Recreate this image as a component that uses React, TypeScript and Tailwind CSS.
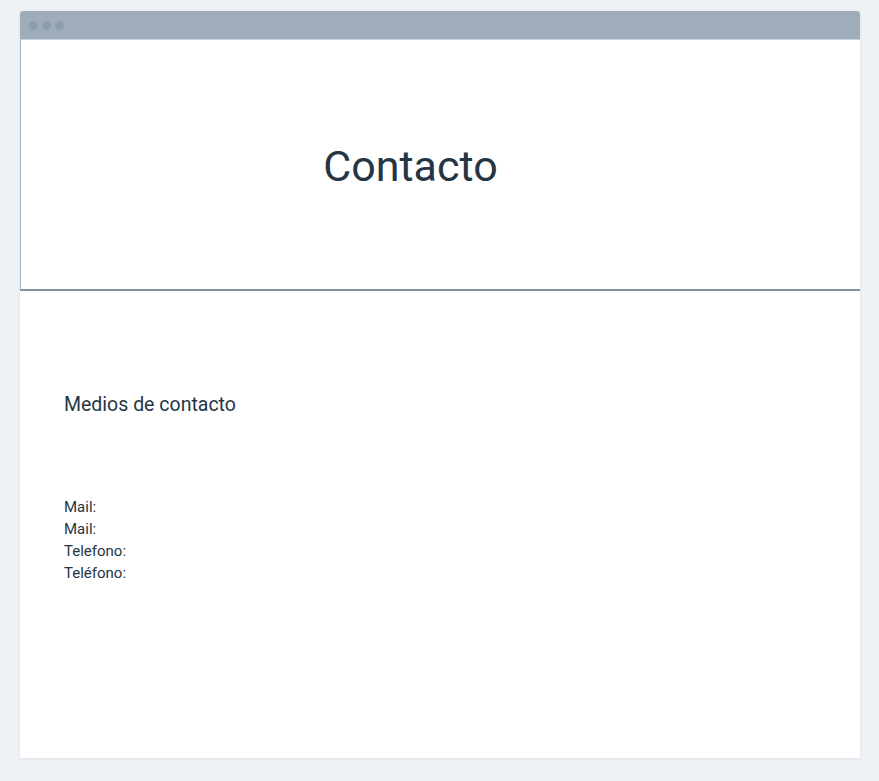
export default function App() {
  return (
    <div className="min-h-[781px] w-full bg-[#eef2f6] pt-[11px] pl-[20px] pr-[19px]" style={{ fontFamily: '"Roboto", "Liberation Sans", sans-serif' }}>
      <div className="w-[840px] bg-white shadow-[0_1px_3px_rgba(0,0,0,0.08)]">
        <div className="h-[29px] rounded-t-[3px] bg-[#9eadb9] flex items-center gap-[4px] pl-[9px] border-b border-[#c5d0d8]">
          <span className="w-[9px] h-[9px] rounded-full bg-[#8e9dab]" />
          <span className="w-[9px] h-[9px] rounded-full bg-[#8e9dab]" />
          <span className="w-[9px] h-[9px] rounded-full bg-[#8e9dab]" />
        </div>
        <div className="h-[251px] border-l border-[#aab6c1] border-b-2 border-b-[#8192a1] flex items-center justify-center pr-[60px] pt-[4px]">
          <h1 className="text-[43px] leading-none text-[#253544]">Contacto</h1>
        </div>
        <div className="h-[467px] pl-[44px] pt-[102px]">
          <h2 className="text-[19.5px] leading-[24px] text-[#253544]">Medios de contacto</h2>
          <div className="mt-[79px] text-[15px] leading-[22px] text-[#253544]">
            <div>Mail:</div>
            <div>Mail:</div>
            <div>Telefono:</div>
            <div>Teléfono:</div>
          </div>
        </div>
      </div>
    </div>
  );
}
